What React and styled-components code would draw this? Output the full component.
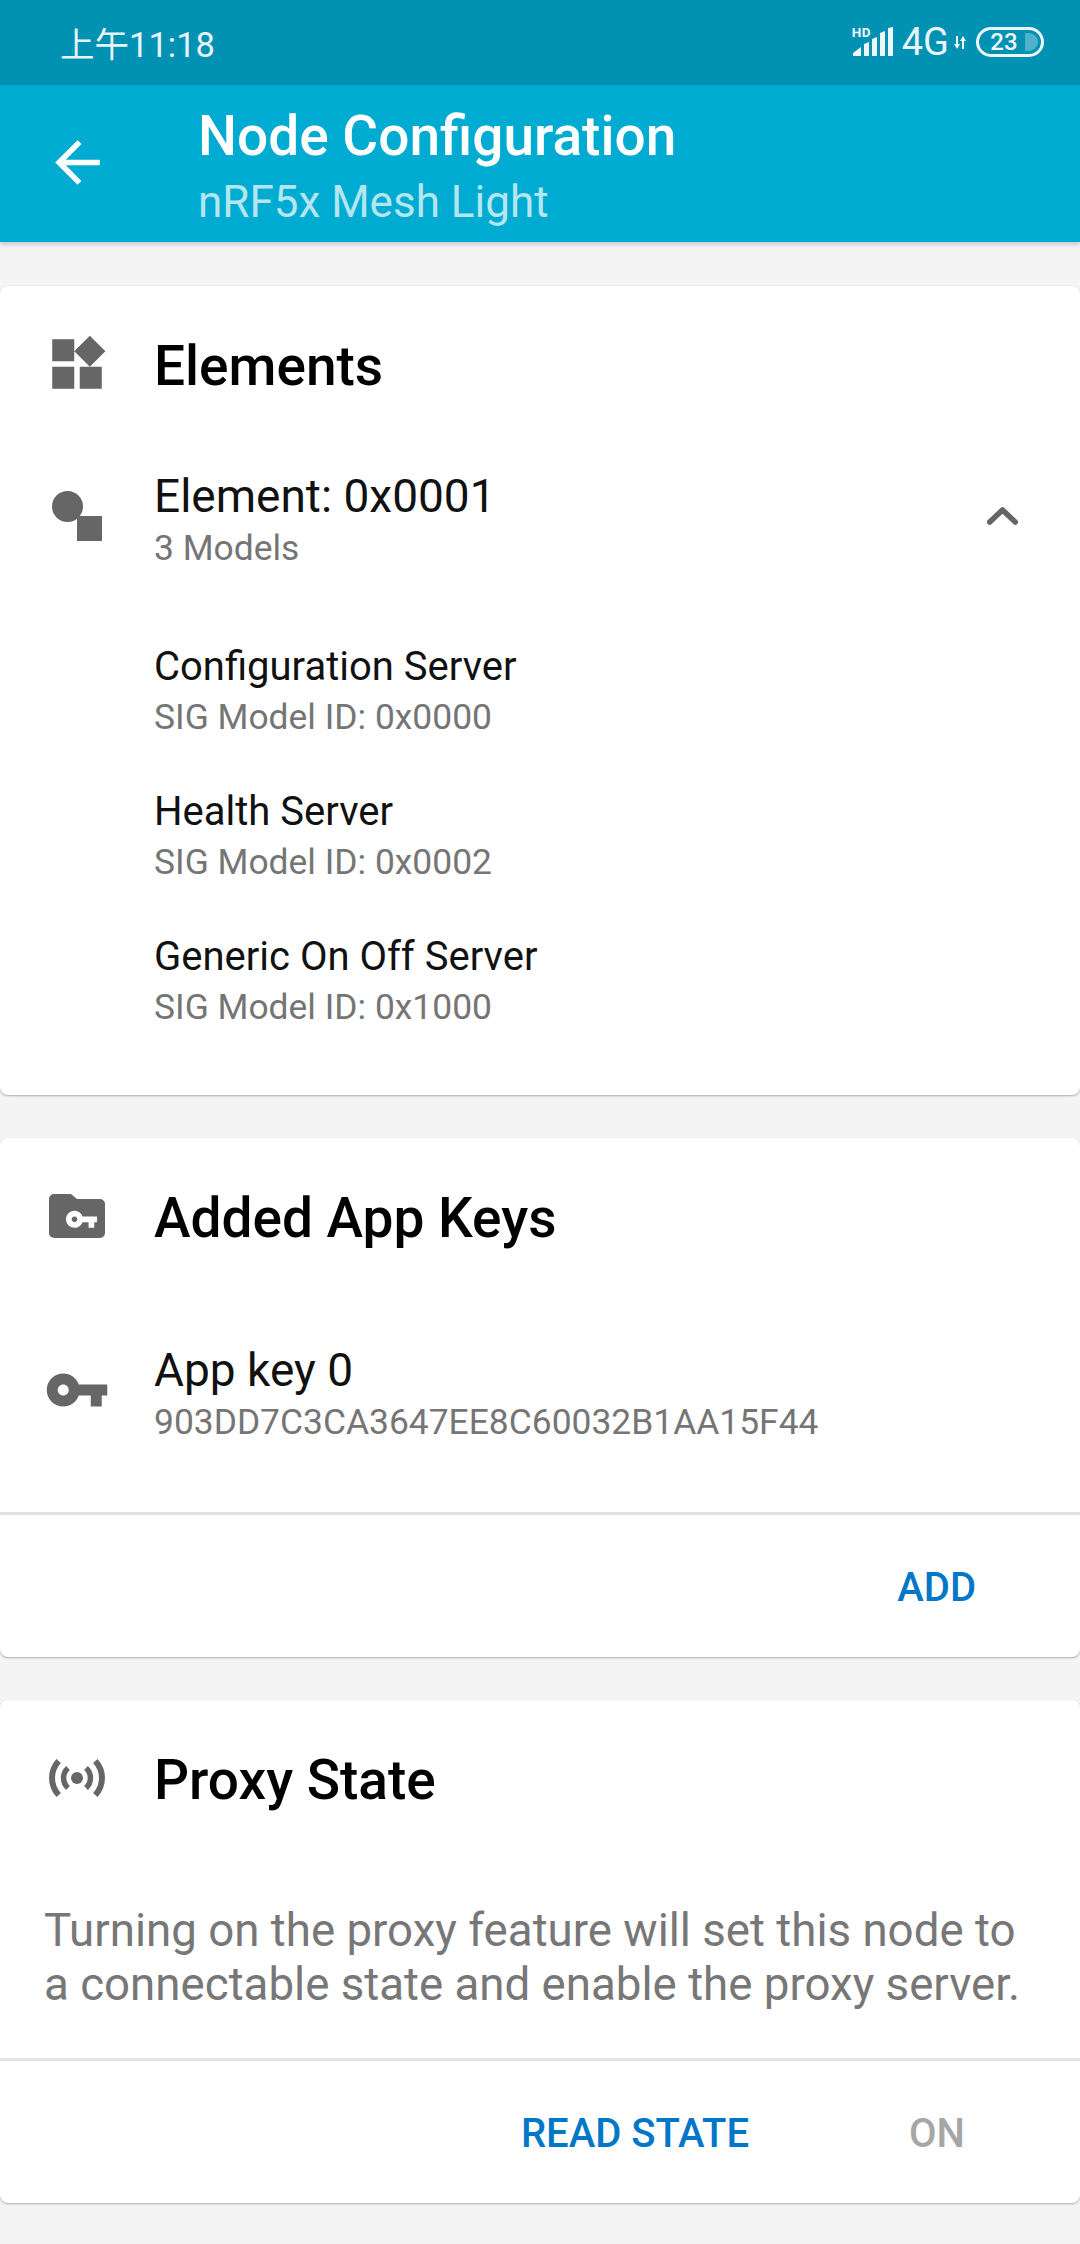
import styled, { createGlobalStyle } from "styled-components";

const Global = createGlobalStyle`
  html, body { margin: 0; padding: 0; background: #f4f4f4; }
  body { font-family: Roboto, "Noto Sans CJK SC", sans-serif; }
  * { box-sizing: border-box; }
`;

const Page = styled.div`
  width: 1080px;
  height: 2244px;
  background: #f4f4f4;
  overflow: hidden;
`;

const StatusBar = styled.div`
  height: 85px;
  background: #0091b3;
  color: #e6f4f8;
  display: flex;
  align-items: center;
  justify-content: space-between;
  padding: 0 36px 0 60px;
`;

const Clock = styled.span`
  font-size: 34.5px;
  margin-top: -2px;
`;

const StatusIcons = styled.div`
  display: flex;
  align-items: center;
  margin-top: -1px;
`;

const Signal = styled.div`
  position: relative;
  width: 42px;
  height: 30px;
`;

const HdLabel = styled.span`
  position: absolute;
  left: 0;
  top: -2px;
  font-size: 13.5px;
  line-height: 14px;
  font-weight: 700;
  letter-spacing: 0.5px;
  color: #eef8fb;
`;

const Network = styled.span`
  font-size: 38px;
  line-height: 40px;
  margin: 0 4px 0 8px;
`;

const BatteryShell = styled.div`
  width: 68px;
  height: 30px;
  margin-left: 10px;
  border: 3px solid #eef8fb;
  border-radius: 15px;
  display: flex;
  align-items: center;
  justify-content: center;
  font-size: 24px;
  font-weight: 500;
  padding-right: 12px;
  color: #eef8fb;
  position: relative;
`;

const BatteryFill = styled.div`
  position: absolute;
  right: 3px;
  top: 3px;
  width: 13px;
  height: 18px;
  border-radius: 0 9px 9px 0;
  background: rgba(255, 255, 255, 0.3);
`;

const AppBar = styled.header`
  height: 157px;
  background: #00abd1;
  display: flex;
  align-items: center;
  box-shadow: 0 2px 5px rgba(0, 0, 0, 0.2);
  padding-left: 44px;
  position: relative;
`;

const BackIcon = styled.svg`
  width: 67px;
  height: 67px;
  margin: -3px 87px 0 0;
  flex: none;
`;

const AppTitles = styled.div`
  display: flex;
  flex-direction: column;
  margin-top: 10px;
`;

const AppTitle = styled.div`
  font-size: 55px;
  font-weight: 500;
  color: #fff;
  line-height: 66px;
`;

const AppSubtitle = styled.div`
  font-size: 44px;
  color: #b3e6f1;
  line-height: 66px;
`;

const Cards = styled.main`
  display: flex;
  flex-direction: column;
  gap: 43px;
  padding-top: 44px;
`;

const Card = styled.section`
  background: #fff;
  border-radius: 8px;
  box-shadow: 0 1px 2px rgba(0, 0, 0, 0.3);
  height: ${(p) => p.$height}px;
  display: flex;
  flex-direction: column;
`;

const CardHead = styled.div`
  display: flex;
  align-items: center;
  height: 160px;
  padding-left: 44px;
  flex: none;
`;

const IconSlot = styled.div`
  width: 110px;
  flex: none;
  display: flex;
  align-items: center;
  padding-left: ${(p) => p.$inset || 0}px;
  margin-top: ${(p) => p.$lift || 0}px;
`;

const CardTitle = styled.h2`
  margin: 0;
  font-size: 55px;
  font-weight: 500;
  color: #000;
`;

const ElementRow = styled.div`
  display: flex;
  align-items: center;
  padding: 0 62px 0 44px;
  height: 140px;
  flex: none;
  margin-top: ${(p) => p.$top || 0}px;
`;

const ElementText = styled.div`
  flex: 1;
  padding-top: 10px;
`;

const ElementName = styled.div`
  font-size: 46px;
  color: #111;
  line-height: 54px;
`;

const ElementSub = styled.div`
  font-size: 35.4px;
  color: #757575;
  line-height: 50px;
`;

const Models = styled.div`
  display: flex;
  flex-direction: column;
  padding: 56px 0 0 154px;
`;

const Model = styled.div`
  height: 145px;
`;

const ModelName = styled.div`
  font-size: 40px;
  color: #111;
  line-height: 50px;
`;

const ModelId = styled.div`
  font-size: 35.4px;
  color: #757575;
  line-height: 50px;
`;

const Description = styled.p`
  margin: 44px 0 0;
  padding: 0 44px;
  font-size: 45.66px;
  line-height: 54px;
  color: #777;
`;

const Actions = styled.div`
  margin-top: auto;
  height: 145px;
  padding-top: 2px;
  border-top: 3px solid #e3e3e3;
  display: flex;
  align-items: center;
  justify-content: flex-end;
`;

const ActionButton = styled.span`
  font-size: 40px;
  font-weight: 500;
  color: ${(p) => (p.$disabled ? "#a6a6a6" : "#0277c8")};
  margin-right: ${(p) => p.$right}px;
`;

const Gray = "#666";

const models = [
  ["Configuration Server", "SIG Model ID: 0x0000"],
  ["Health Server", "SIG Model ID: 0x0002"],
  ["Generic On Off Server", "SIG Model ID: 0x1000"],
];

const keyPath =
  "M12.65 10C11.83 7.67 9.61 6 7 6c-3.31 0-6 2.69-6 6s2.69 6 6 6c2.61 0 4.83-1.67 5.65-4H17v4h4v-4h2v-4H12.65zM7 14c-1.1 0-2-.9-2-2s.9-2 2-2 2 .9 2 2-.9 2-2 2z";

export default function App() {
  return (
    <Page>
      <Global />
      <StatusBar>
        <Clock>上午11:18</Clock>
        <StatusIcons>
          <Signal>
            <HdLabel>HD</HdLabel>
            <svg width="42" height="30" viewBox="0 0 42 30" fill="#eef8fb">
              <path d="M1 29v-3l8-6v9zM12 29V17l5-2v14zM20 29V12l5-2v19zM28 29V6l5-2v25zM36 29V1l5-1v29z" />
            </svg>
          </Signal>
          <Network>4G</Network>
          <svg width="13" height="13" viewBox="0 0 13 13" fill="#eef8fb">
            <path d="M3 0h2v8h2l-3 5-3-5h2zM9 13h2V5h2L10 0 7 5h2z" />
          </svg>
          <BatteryShell>
            23
            <BatteryFill />
          </BatteryShell>
        </StatusIcons>
      </StatusBar>
      <AppBar>
        <BackIcon viewBox="0 0 24 24" fill="#fff">
          <path d="M20 11H7.83l5.59-5.59L12 4l-8 8 8 8 1.41-1.41L7.83 13H20v-2z" />
        </BackIcon>
        <AppTitles>
          <AppTitle>Node Configuration</AppTitle>
          <AppSubtitle>nRF5x Mesh Light</AppSubtitle>
        </AppTitles>
      </AppBar>
      <Cards>
        <Card $height={809}>
          <CardHead>
            <IconSlot $lift={-4}>
              <svg width="66" height="66" viewBox="0 0 24 24" fill={Gray}>
                <path d="M13 13v8h8v-8h-8zM3 21h8v-8H3v8zM3 3v8h8V3H3zm13.66-1.31L11 7.34 16.66 13l5.66-5.66-5.66-5.65z" />
              </svg>
            </IconSlot>
            <CardTitle>Elements</CardTitle>
          </CardHead>
          <ElementRow>
            <IconSlot $inset={8}>
              <svg width="50" height="50" viewBox="0 0 50 50" fill={Gray}>
                <circle cx="15.5" cy="15.5" r="15.5" />
                <rect x="25" y="25" width="25" height="25" />
              </svg>
            </IconSlot>
            <ElementText>
              <ElementName>Element: 0x0001</ElementName>
              <ElementSub>3 Models</ElementSub>
            </ElementText>
            <svg width="31" height="18" viewBox="0 0 31 18">
              <path d="M2.75 15L15.5 3l12.75 12" fill="none" stroke={Gray} strokeWidth="5.5" strokeLinecap="round" strokeLinejoin="round" />
            </svg>
          </ElementRow>
          <Models>
            {models.map(([name, id]) => (
              <Model key={name}>
                <ModelName>{name}</ModelName>
                <ModelId>{id}</ModelId>
              </Model>
            ))}
          </Models>
        </Card>
        <Card $height={519}>
          <CardHead>
            <IconSlot $inset={5} $lift={-4}>
              <svg width="56" height="44" viewBox="0 0 56 44">
                <path d="M5 0h17l6 5h23a5 5 0 0 1 5 5v29a5 5 0 0 1-5 5H5a5 5 0 0 1-5-5V5a5 5 0 0 1 5-5z" fill={Gray} />
                <path d={keyPath} fill="#fff" transform="translate(15.6 8.4) scale(1.41)" />
              </svg>
            </IconSlot>
            <CardTitle>Added App Keys</CardTitle>
          </CardHead>
          <ElementRow $top={22}>
            <IconSlot>
              <svg width="66" height="66" viewBox="0 0 24 24" fill={Gray}>
                <path d={keyPath} />
              </svg>
            </IconSlot>
            <ElementText>
              <ElementName>App key 0</ElementName>
              <ElementSub>903DD7C3CA3647EE8C60032B1AA15F44</ElementSub>
            </ElementText>
          </ElementRow>
          <Actions>
            <ActionButton $right={104}>ADD</ActionButton>
          </Actions>
        </Card>
        <Card $height={503}>
          <CardHead>
            <IconSlot $inset={5} $lift={-4}>
              <svg width="56" height="40" viewBox="0 0 56 40" fill="none" stroke={Gray}>
                <circle cx="28" cy="20" r="6" fill={Gray} stroke="none" />
                <path strokeWidth="5.5" d="M19 10A13.5 13.5 0 0 0 19 30M37 10A13.5 13.5 0 0 1 37 30" />
                <path strokeWidth="6" d="M9.7 3A25 25 0 0 0 9.7 37M46.3 3A25 25 0 0 1 46.3 37" />
              </svg>
            </IconSlot>
            <CardTitle>Proxy State</CardTitle>
          </CardHead>
          <Description>
            Turning on the proxy feature will set this node to a connectable state and enable the proxy server.
          </Description>
          <Actions>
            <ActionButton $right={160}>READ STATE</ActionButton>
            <ActionButton $right={115} $disabled>ON</ActionButton>
          </Actions>
        </Card>
      </Cards>
    </Page>
  );
}
